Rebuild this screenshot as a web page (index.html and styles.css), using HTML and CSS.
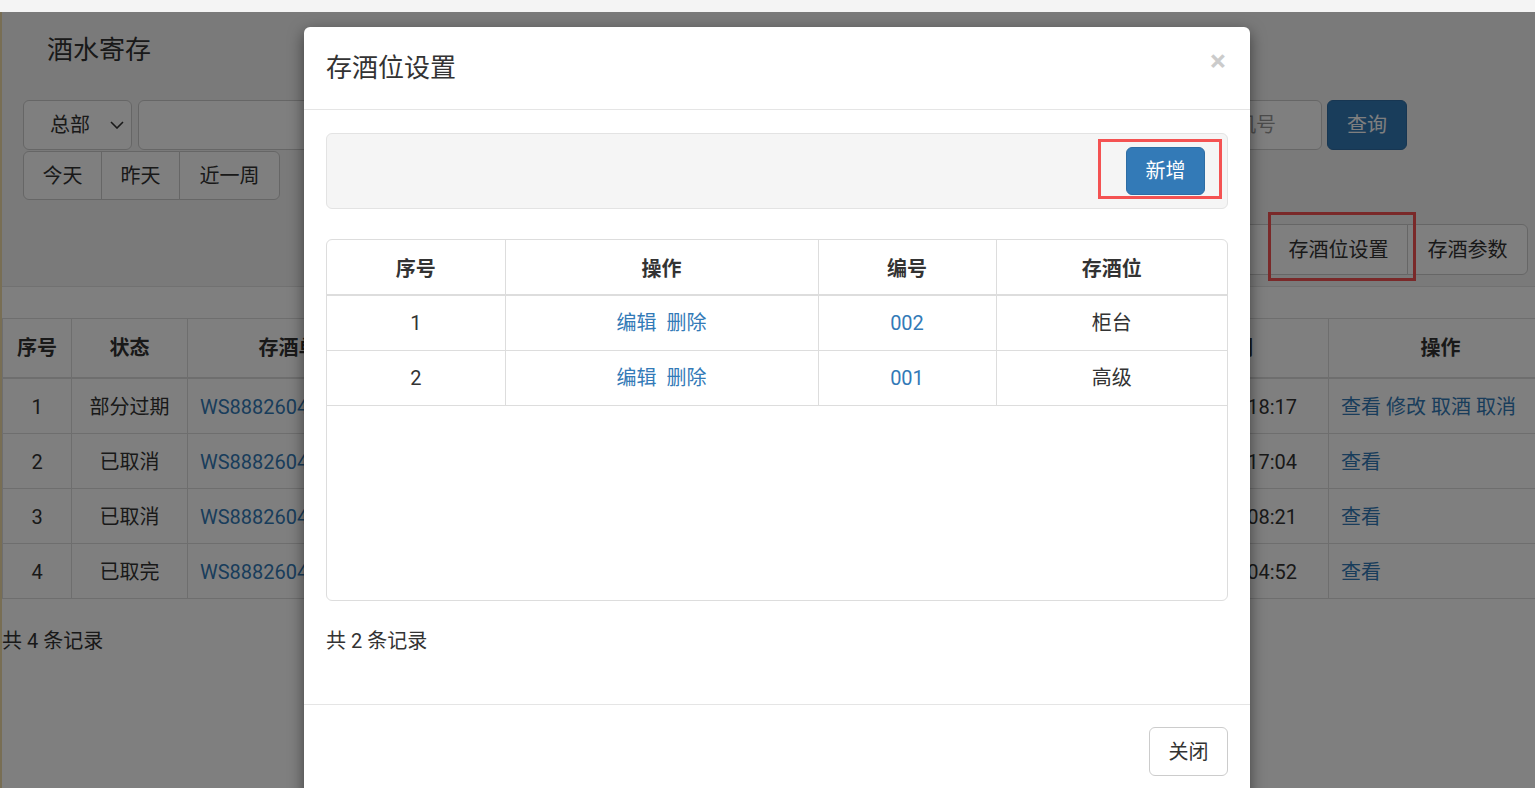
FILE: index.html
```html
<!DOCTYPE html>
<html lang="zh-CN">
<head>
    <meta charset="UTF-8">
    <meta name="viewport" content="width=device-width, initial-scale=1.0">
    <title>酒水寄存</title>
    <link rel="stylesheet" href="styles.css">
</head>
<body>

    <div class="topbar"></div>

    <div class="viewport">
        <!-- 酒水寄存 list page -->
        <div class="page">
            <div class="search-panel">
                <h3 class="page-title">酒水寄存</h3>

                <div class="form-row">
                    <div class="select">
                        <span>总部</span>
                        <svg width="14" height="8" viewBox="0 0 14 8"><path d="M1 1l6 6 6-6" fill="none" stroke="#333" stroke-width="1.6"/></svg>
                    </div>
                    <input class="input input-date" type="text">
                    <div class="spacer"></div>
                    <input class="input input-phone" type="text" placeholder="会员手机号">
                    <button class="btn btn-primary btn-query">查询</button>
                </div>

                <div class="btn-group">
                    <button class="btn btn-default">今天</button>
                    <button class="btn btn-default">昨天</button>
                    <button class="btn btn-default">近一周</button>
                </div>

                <div class="tools">
                    <div class="btn-group">
                        <button class="btn btn-default btn-export">导出</button>
                        <button class="btn btn-default btn-slot">存酒位设置</button>
                        <button class="btn btn-default btn-param">存酒参数</button>
                    </div>
                    <span class="mark mark-tools"></span>
                </div>
            </div>

            <table class="grid">
                <colgroup>
                    <col style="width: 69px">
                    <col style="width: 116px">
                    <col style="width: 222px">
                    <col style="width: 220px">
                    <col style="width: 220px">
                    <col style="width: 100px">
                    <col style="width: 148px">
                    <col style="width: 231px">
                    <col style="width: 224px">
                </colgroup>
                <thead>
                    <tr>
                        <th>序号</th><th>状态</th><th>存酒单号</th><th>会员</th><th>酒品</th><th>数量</th><th>存酒位</th><th>存酒时间</th><th>操作</th>
                    </tr>
                </thead>
                <tbody>
                    <tr>
                        <td class="c">1</td><td class="c">部分过期</td><td><a>WS8882604180001</a></td><td>张先生</td><td>红酒</td><td class="c">2</td><td class="c">柜台</td><td class="time">2024-04-18 21:18:17</td>
                        <td><a>查看</a> <a>修改</a> <a>取酒</a> <a>取消</a></td>
                    </tr>
                    <tr>
                        <td class="c">2</td><td class="c">已取消</td><td><a>WS8882604170002</a></td><td>李女士</td><td>啤酒</td><td class="c">6</td><td class="c">高级</td><td class="time">2024-04-17 20:17:04</td>
                        <td><a>查看</a></td>
                    </tr>
                    <tr>
                        <td class="c">3</td><td class="c">已取消</td><td><a>WS8882604160003</a></td><td>王先生</td><td>洋酒</td><td class="c">1</td><td class="c">柜台</td><td class="time">2024-04-16 22:08:21</td>
                        <td><a>查看</a></td>
                    </tr>
                    <tr>
                        <td class="c">4</td><td class="c">已取完</td><td><a>WS8882604150004</a></td><td>赵先生</td><td>白酒</td><td class="c">2</td><td class="c">高级</td><td class="time">2024-04-15 23:04:52</td>
                        <td><a>查看</a></td>
                    </tr>
                </tbody>
            </table>

            <div class="total">共 4 条记录</div>
        </div>

        <div class="backdrop"></div>

        <!-- 存酒位设置 dialog -->
        <div class="modal">
            <div class="modal-header">
                <h4 class="modal-title">存酒位设置</h4>
                <span class="close">&times;</span>
            </div>

            <div class="modal-body">
                <div class="toolbar">
                    <button class="btn btn-primary">新增</button>
                    <span class="mark mark-add"></span>
                </div>

                <div class="table-box">
                    <table class="grid grid-modal">
                        <colgroup>
                            <col style="width: 178px">
                            <col style="width: 313px">
                            <col style="width: 178px">
                            <col>
                        </colgroup>
                        <thead>
                            <tr><th>序号</th><th>操作</th><th>编号</th><th>存酒位</th></tr>
                        </thead>
                        <tbody>
                            <tr>
                                <td class="c">1</td>
                                <td class="c"><a>编辑</a>&nbsp;&nbsp;<a>删除</a></td>
                                <td class="c"><a>002</a></td>
                                <td class="c">柜台</td>
                            </tr>
                            <tr>
                                <td class="c">2</td>
                                <td class="c"><a>编辑</a>&nbsp;&nbsp;<a>删除</a></td>
                                <td class="c"><a>001</a></td>
                                <td class="c">高级</td>
                            </tr>
                        </tbody>
                    </table>
                </div>

                <div class="modal-total">共 2 条记录</div>
            </div>

            <div class="modal-footer">
                <button class="btn btn-default">关闭</button>
            </div>
        </div>
    </div>

</body>
</html>
```

FILE: styles.css
```css
* {
    box-sizing: border-box;
}

body {
    margin: 0;
    font-family: Roboto, "Noto Sans CJK SC", sans-serif;
    font-size: 20px;
    line-height: 28px;
    color: #333;
    background: #fff;
    overflow: hidden;
}

.topbar {
    height: 12px;
    background: #f4f4f4;
}

.viewport {
    position: relative;
    height: 776px;
    overflow: hidden;
}

/* Page under the dialog */
.page {
    border-left: 2px solid #f0dca8;
    height: 100%;
}

.search-panel {
    background: #f5f5f5;
    border-bottom: 1px solid #e3e3e3;
    padding: 20px 7px 11px 21px;
}

.page-title {
    margin: 0 0 31px 24px;
    font-size: 26px;
    line-height: 37px;
    font-weight: normal;
}

.form-row {
    display: flex;
    gap: 5px;
    height: 50px;
    margin-right: 121px;
}

.select {
    width: 109px;
    height: 50px;
    border: 1px solid #ccc;
    border-radius: 6px;
    background: #fff;
    display: flex;
    align-items: center;
    justify-content: space-between;
    padding: 0 7px 0 26px;
    margin-right: 1px;
}

.input {
    height: 50px;
    border: 1px solid #ccc;
    border-radius: 6px;
    background: #fff;
    font: inherit;
    padding: 0 16px;
}

.input::placeholder {
    color: #999;
}

.input-date {
    width: 300px;
}

.spacer {
    flex: 1;
}

.input-phone {
    width: 163px;
}

.btn {
    font: inherit;
    height: 49px;
    padding: 0 18px;
    border: 1px solid #ccc;
    border-radius: 6px;
    background: #fff;
    color: #333;
    cursor: pointer;
}

.btn-primary {
    background: #337ab7;
    border-color: #2e6da4;
    color: #fff;
}

.btn-query {
    width: 80px;
    height: 50px;
    padding: 0;
}

.btn-group {
    display: flex;
    margin-top: 1px;
}

.btn-group .btn {
    border-radius: 0;
    margin-left: -1px;
}

.btn-group .btn:first-child {
    margin-left: 0;
    border-radius: 6px 0 0 6px;
}

.btn-group .btn:last-child {
    border-radius: 0 6px 6px 0;
}

.search-panel > .btn-group .btn:nth-child(1) { width: 79px; }
.search-panel > .btn-group .btn:nth-child(2) { width: 79px; }
.search-panel > .btn-group .btn:nth-child(3) { width: 101px; }

.tools {
    position: relative;
    display: flex;
    justify-content: flex-end;
    margin-top: 23px;
}

.tools .btn {
    height: 51px;
    padding: 0;
}

.btn-export { width: 110px; }
.btn-slot { width: 139px; }
.btn-param { width: 121px; }

/* red highlight frames */
.mark {
    position: absolute;
    border: 3px solid #f45252;
    pointer-events: none;
}

.mark-tools {
    right: 112px;
    top: -11px;
    width: 148px;
    height: 69px;
}

/* Tables */
.grid {
    border-collapse: collapse;
    table-layout: fixed;
    width: 1550px;
    margin-top: 31px;
}

.grid th,
.grid td {
    border: 1px solid #ddd;
    padding: 14px 12px 12px;
    text-align: left;
    white-space: nowrap;
    overflow: hidden;
}

.grid th {
    text-align: center;
    font-weight: bold;
    padding: 15px 12px;
    border-bottom: 2px solid #ddd;
}

.grid .c {
    text-align: center;
}

.grid .time {
    padding-left: 16px;
}

.grid a {
    color: #337ab7;
    cursor: pointer;
}

.total {
    margin-top: 28px;
}

/* Dialog */
.backdrop {
    position: absolute;
    inset: 0;
    background: rgba(0, 0, 0, 0.5);
}

.modal {
    position: absolute;
    left: 304px;
    top: 15px;
    width: 946px;
    background: #fff;
    border-radius: 6px;
    box-shadow: 0 5px 15px rgba(0, 0, 0, 0.5);
}

.modal-header {
    display: flex;
    justify-content: space-between;
    align-items: flex-start;
    padding: 23px 22px 22px;
    border-bottom: 1px solid #e5e5e5;
}

.modal-title {
    margin: 0;
    font-size: 26px;
    line-height: 37px;
    font-weight: normal;
}

.close {
    font-size: 30px;
    line-height: 30px;
    font-weight: bold;
    color: #000;
    opacity: 0.2;
    margin: -4px 2px 0 0;
}

.modal-body {
    padding: 23px 22px 49px;
}

.toolbar {
    position: relative;
    display: flex;
    justify-content: flex-end;
    background: #f5f5f5;
    border: 1px solid #e3e3e3;
    border-radius: 6px;
    padding: 13px 22px 13px;
}

.toolbar .btn {
    width: 79px;
    height: 48px;
    padding: 0;
}

.mark-add {
    right: 5px;
    top: 5px;
    width: 124px;
    height: 60px;
}

.table-box {
    margin-top: 30px;
    height: 362px;
    border: 1px solid #ddd;
    border-radius: 6px;
    overflow: hidden;
}

.grid-modal {
    width: 100%;
    margin: 0;
}

.grid-modal th,
.grid-modal td {
    border-top: 0;
}

.grid-modal th:first-child,
.grid-modal td:first-child {
    border-left: 0;
}

.grid-modal th:last-child,
.grid-modal td:last-child {
    border-right: 0;
}

.grid-modal th {
    padding: 15px 12px 11px;
}

.grid-modal td {
    padding: 13px 12px;
}

.modal-total {
    margin-top: 26px;
}

.modal-footer {
    display: flex;
    justify-content: flex-end;
    border-top: 1px solid #e5e5e5;
    padding: 22px 22px 23px;
}

.modal-footer .btn {
    width: 79px;
}
```
